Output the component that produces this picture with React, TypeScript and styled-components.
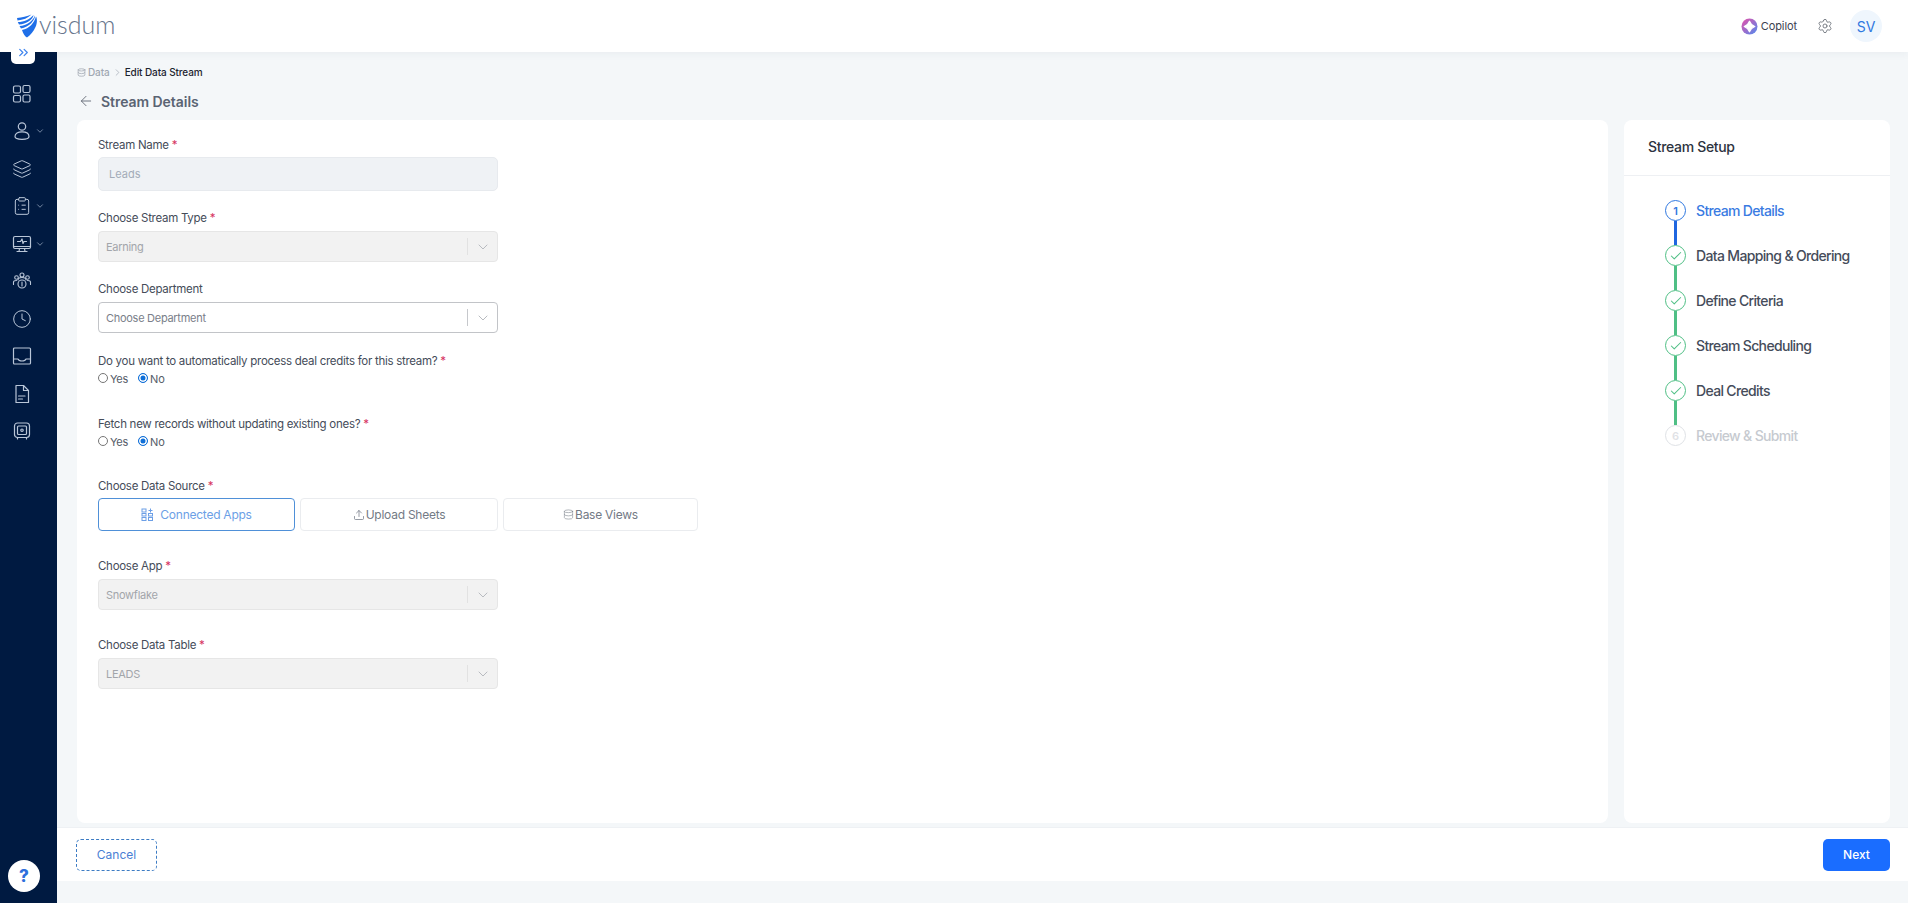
import React from "react";
import styled, { createGlobalStyle } from "styled-components";
import { ChevronDown, ChevronsRight, ChevronRight, ArrowLeft, Layers, ClipboardList, Clock, Settings, Upload, Database, Check } from "lucide-react";

const Global = createGlobalStyle`
  html, body { margin: 0; padding: 0; height: 100%; background: #f4f7f9; }
  body { font-family: Inter, "Noto Sans", sans-serif; color: #3f4654; overflow: hidden; }
  * { box-sizing: border-box; }
`;
const Shell = styled.div`
  width: 1908px; height: 903px; display: flex; flex-direction: column; position: relative;
`;
const Header = styled.header`
  height: 52px; flex: none; background: #fff; display: flex; align-items: center; justify-content: space-between;
  padding: 0 26px 0 17px; box-shadow: 0 2px 8px rgba(30,50,80,.05); position: relative; z-index: 2;
`;
const Logo = styled.div`
  display: flex; align-items: center; gap: 2px; margin-top: -1px;
`;
const LogoText = styled.span`
  font-family: Lato, sans-serif; font-weight: 300; font-size: 25px; color: #66758c; line-height: 1; margin-top: -2px;
`;
const HeaderRight = styled.div`
  display: flex; align-items: center;
`;
const Copilot = styled.div`
  display: flex; align-items: center; gap: 3px; font-size: 11px; font-weight: 400; letter-spacing: -.1px; color: #3c4250; margin-right: 20px;
`;
const Avatar = styled.div`
  width: 32px; height: 32px; border-radius: 50%; background: #eff6fd; color: #2f78e0; font-size: 14px;
  display: flex; align-items: center; justify-content: center; margin-left: 17px;
`;
const Body = styled.div`
  flex: 1; display: flex; min-height: 0;
`;
const Sidebar = styled.nav`
  width: 57px; flex: none; background: #001a41; position: relative; padding-top: 23px;
  display: flex; flex-direction: column; align-items: flex-start;
`;
const Toggle = styled.div`
  position: absolute; top: -12px; left: 11px; width: 24px; height: 24px; background: #fff; border-radius: 0 0 5px 5px;
  display: flex; align-items: center; justify-content: center; color: #3f84ee; z-index: 3;
`;
const NavItem = styled.div`
  height: 37.5px; width: 100%; padding-left: 12px; display: flex; align-items: center; gap: 3px; color: #b9c6d8; flex: none;
`;
const Help = styled.div`
  position: absolute; left: 8px; bottom: 11px; width: 32px; height: 32px; border-radius: 50%; background: #fff; color: #2f6fdc;
  font-weight: 800; font-size: 17px; display: flex; align-items: center; justify-content: center;
`;
const Main = styled.main`
  flex: 1; min-width: 0; display: flex; flex-direction: column;
`;
const Content = styled.div`
  flex: 1; min-height: 0; padding: 13px 18px 4px 20px; display: flex; flex-direction: column;
`;
const Crumbs = styled.div`
  display: flex; align-items: center; gap: 2px; height: 14px; font-size: 10px; font-weight: 500; color: #a0a7b2; letter-spacing: -.1px;
`;
const CrumbNow = styled.span`
  color: #1d2430; font-weight: 500; letter-spacing: -.1px;
`;
const TitleRow = styled.div`
  display: flex; align-items: center; gap: 7px; height: 24px; margin-top: 10px; margin-bottom: 7px; padding-left: 1px;
`;
const Title = styled.h1`
  margin: 0; font-size: 14px; font-weight: 600; color: #5a6473; letter-spacing: -.05px;
`;
const Cards = styled.div`
  flex: 1; display: flex; gap: 16px; min-height: 0;
`;
const FormCard = styled.section`
  flex: 1; background: #fff; border-radius: 8px; padding: 18px 21px;
`;
const Field = styled.div<{ $h: number }>`
  height: ${(p) => p.$h}px; width: 400px;
`;
const Label = styled.label`
  display: block; font-size: 11.5px; line-height: 14px; color: #454c59; font-weight: 400; letter-spacing: -.28px; white-space: nowrap;
`;
const Req = styled.span`
  color: #d6335f;
`;
const TextInput = styled.div`
  margin-top: 5px; height: 34px; background: #eff2f5; border: 1px solid #e7eaee; border-radius: 5px; padding-left: 10px;
  font-size: 11px; color: #a3acb8; display: flex; align-items: center;
`;
const Select = styled.div<{ $on?: boolean }>`
  margin-top: 6px; height: 31px; border-radius: 4px; display: flex; align-items: center; padding-left: 7px;
  font-size: 11px; letter-spacing: -.28px;
  background: ${(p) => (p.$on ? "#fff" : "#f2f2f2")};
  border: 1px solid ${(p) => (p.$on ? "#c2c4c8" : "#e6e6e6")};
  color: ${(p) => (p.$on ? "#7a808a" : "#a2a5aa")};
`;
const SelectText = styled.span`
  flex: 1;
`;
const SelectSep = styled.span<{ $on?: boolean }>`
  width: 1px; height: 17px; background: ${(p) => (p.$on ? "#c6c8cc" : "#e2e2e2")};
`;
const SelectArrow = styled.span`
  width: 29px; display: flex; justify-content: center; color: #b8bbc0;
`;
const Radios = styled.div`
  display: flex; align-items: center; margin-top: 3px; height: 16px; font-size: 11px; color: #555c68; letter-spacing: -.25px;
`;
const Radio = styled.span<{ $on?: boolean }>`
  width: 10px; height: 10px; border-radius: 50%; flex: none; margin-right: 2px; margin-top: -2px;
  border: 1px solid ${(p) => (p.$on ? "#0f6fd8" : "#767676")};
  background: ${(p) => (p.$on ? "#0f6fd8" : "#fff")};
  box-shadow: ${(p) => (p.$on ? "inset 0 0 0 1.5px #fff" : "none")};
`;
const RadioText = styled.span`
  margin-right: 10px;
`;
const Tabs = styled.div`
  display: flex; gap: 5px; margin-top: 5px; width: 600px;
`;
const Tab = styled.div<{ $on?: boolean; $w: number }>`
  width: ${(p) => p.$w}px; flex: none; height: 33px; border-radius: 4px; display: flex; align-items: center; justify-content: center;
  font-size: 12px; letter-spacing: -.25px;
  gap: ${(p) => (p.$on ? 6 : 1)}px;
  border: 1px solid ${(p) => (p.$on ? "#4f90d8" : "#eaecef")};
  color: ${(p) => (p.$on ? "#6c9fe6" : "#737a85")};
`;
const SideCard = styled.aside`
  width: 266px; flex: none; background: #fff; border-radius: 8px;
`;
const SideHead = styled.div`
  height: 56px; border-bottom: 1px solid #eef0f3; padding: 0 0 2px 24px; display: flex; align-items: center;
  font-size: 14px; font-weight: 500; color: #2d3340; letter-spacing: -.32px;
`;
const Steps = styled.ol`
  list-style: none; margin: 0; padding: 24px 0 0 41px;
`;
const Step = styled.li`
  display: flex; flex-direction: column;
`;
const StepRow = styled.div`
  display: flex; align-items: center; gap: 10px;
`;
const Dot = styled.span<{ $c: string }>`
  width: 21px; height: 21px; border-radius: 50%; flex: none; display: flex; align-items: center; justify-content: center;
  border: 1.3px solid ${(p) => p.$c}; color: ${(p) => p.$c}; font-size: 11px; font-weight: 600;
`;
const StepText = styled.span<{ $c: string }>`
  font-size: 14px; font-weight: 500; color: ${(p) => p.$c}; letter-spacing: -.66px; white-space: nowrap;
`;
const Line = styled.span<{ $c: string }>`
  display: block; width: 3px; height: 24px; margin-left: 9px; background: ${(p) => p.$c};
`;
const Footer = styled.footer`
  height: 54px; flex: none; background: #fff; display: flex; align-items: center; justify-content: space-between;
  padding: 0 18px 0 19px; border-top: 1px solid #eef1f4;
`;
const Cancel = styled.button`
  width: 81px; height: 32px; border: 1px dashed #3d7cc4; border-radius: 5px; background: #fff; color: #4a7fd4;
  font: 400 12px Inter, sans-serif;
`;
const Next = styled.button`
  width: 67px; height: 32px; border: 0; border-radius: 5px; background: #1a6dff; color: #fff;
  font: 500 12px Inter, sans-serif;
`;
const Strip = styled.div`
  height: 22px; flex: none;
`;

const Shield = () => (
  <svg width="20" height="24" viewBox="0 0 20 24" fill="#1f6fe8">
    <path d="M0 4C5 3.500 10 2.500 14.500 0.500C11 4 6 6 0.500 6.500Z" />
    <path d="M0.800 8C7 8 12.500 5.500 16.500 1C16.500 5 9 10.500 2 10.500Z" />
    <path d="M2.500 12C10 11.500 15.500 7.500 18 1.500C18.500 5.500 12 13.500 4 14.500Z" />
    <path d="M5 16C12.500 14.500 17 9 19 2.500C20.500 5 20 10 18.500 13C16.500 17.500 13.500 21 10 23.500C8 22.500 6 19.500 5 16Z" />
  </svg>
);
const CopilotIcon = () => (
  <svg width="17" height="17" viewBox="0 0 17 17">
    <defs>
      <linearGradient id="cg" x1="0" y1="0" x2="1" y2="1">
        <stop offset="0" stopColor="#e84fa8" />
        <stop offset="1" stopColor="#4f8cf0" />
      </linearGradient>
    </defs>
    <circle cx="8.500" cy="8.500" r="8" fill="url(#cg)" />
    <path d="M8.500 3.200C9.500 6 11 7.500 13.800 8.500C11 9.500 9.500 11 8.500 13.800C7.500 11 6 9.500 3.200 8.500C6 7.500 7.500 6 8.500 3.200Z" fill="#fff" stroke="#fff" strokeWidth="1.200" strokeLinejoin="round" />
  </svg>
);
const Stroke = styled.svg.attrs({ viewBox: "0 0 20 20", fill: "none", stroke: "currentColor" })`
  width: 20px; height: 20px; stroke-width: 1.2; stroke-linejoin: round; stroke-linecap: round; flex: none;
`;
const GridIcon = () => (
  <Stroke>
    <rect x="1.500" y="2" width="7" height="7" rx="1.500" />
    <rect x="11" y="1.500" width="7" height="7" rx="1.500" />
    <rect x="1.500" y="11.500" width="7" height="6.500" rx="1.500" />
    <rect x="11" y="11" width="7" height="7" rx="1.500" />
  </Stroke>
);
const UserIcon = () => (
  <Stroke>
    <circle cx="10" cy="5.500" r="3.700" />
    <path d="M3 15.500C3 12.500 6 10.800 10 10.800S17 12.500 17 15.500C17 17.500 14 18.300 10 18.300S3 17.500 3 15.500Z" />
  </Stroke>
);
const MonitorIcon = () => (
  <Stroke>
    <rect x="1.500" y="2.500" width="17" height="12" rx="1.500" />
    <path d="M1.500 12.500H18.500M7.500 14.500L7 17.500M12.500 14.500L13 17.500M5 17.500H15M5.500 7.500H8.500L10 5L11 9.500L12 7.500H14.500" />
  </Stroke>
);
const Team = () => (
  <Stroke style={{ strokeWidth: 1.1 }}>
    <circle cx="10" cy="4" r="2" />
    <circle cx="4.500" cy="6.500" r="1.800" />
    <circle cx="15.500" cy="6.500" r="1.800" />
    <path d="M1.500 13.500V11c0-1 1-1.500 3-1.500M18.500 13.500V11c0-1-1-1.500-3-1.500M6 9c0-1.500 1.500-2.500 4-2.500S14 7.500 14 9" />
    <circle cx="10" cy="13" r="4" />
    <path d="M10 11v4" />
  </Stroke>
);
const Inbox = () => (
  <Stroke>
    <rect x="1.500" y="2" width="17" height="16" rx="1" />
    <path d="M1.500 13H6c.6 1.500 2 2 4 2s3.400-.5 4-2h4.500" />
  </Stroke>
);
const FileIcon = () => (
  <Stroke>
    <path d="M4 1.500H11.500L16.500 6.500V18.500H4Z" />
    <path d="M11.500 1.500V6.500H16.500M6.500 12H13M6.500 15H10.500" />
  </Stroke>
);
const Safe = () => (
  <Stroke>
    <rect x="2.500" y="2" width="15" height="14.500" rx="3" />
    <rect x="5.500" y="5" width="9" height="8.500" rx="1" />
    <circle cx="10" cy="9.200" r="1.200" />
    <path d="M5.500 16.500V18M14.500 16.500V18" />
  </Stroke>
);
const AppsIcon = () => (
  <svg width="13" height="13" viewBox="0 0 13 13" fill="none" stroke="currentColor" strokeWidth="1">
    <rect x="1" y="1" width="4" height="3" />
    <rect x="1" y="5.500" width="4" height="2.500" />
    <rect x="1" y="9.500" width="4" height="3" />
    <rect x="7.500" y="5.500" width="4" height="2.500" />
    <rect x="7.500" y="9.500" width="4" height="3" />
    <path d="M9.500 .5v4M7.500 2.500h4" />
  </svg>
);

const icons: { el: React.ReactNode; caret?: boolean }[] = [
  { el: <GridIcon /> },
  { el: <UserIcon />, caret: true },
  { el: <Layers size={20} strokeWidth={1.2} /> },
  { el: <ClipboardList size={20} strokeWidth={1.2} />, caret: true },
  { el: <MonitorIcon />, caret: true },
  { el: <Team /> },
  { el: <Clock size={20} strokeWidth={1.2} /> },
  { el: <Inbox /> },
  { el: <FileIcon /> },
  { el: <Safe /> },
];

const steps = [
  { t: "Stream Details", c: "#2f78e0", tc: "#3a7be2", n: "1", line: "#1f66e0" },
  { t: "Data Mapping & Ordering", c: "#4fbf85", tc: "#454c5a", line: "#4fbf85" },
  { t: "Define Criteria", c: "#4fbf85", tc: "#454c5a", line: "#4fbf85" },
  { t: "Stream Scheduling", c: "#4fbf85", tc: "#454c5a", line: "#4fbf85" },
  { t: "Deal Credits", c: "#4fbf85", tc: "#454c5a", line: "#4fbf85" },
  { t: "Review & Submit", c: "#dfe2e6", tc: "#c6cad0", n: "6" },
];

const Sel = ({ text, on }: { text: string; on?: boolean }) => (
  <Select $on={on}>
    <SelectText>{text}</SelectText>
    <SelectSep $on={on} />
    <SelectArrow><ChevronDown size={16} strokeWidth={1.5} /></SelectArrow>
  </Select>
);
const RadioSet = () => (
  <Radios>
    <Radio />
    <RadioText>Yes</RadioText>
    <Radio $on />
    <span>No</span>
  </Radios>
);

export default function App() {
  return (
    <Shell>
      <Global />
      <Header>
        <Logo>
          <Shield />
          <LogoText>visdum</LogoText>
        </Logo>
        <HeaderRight>
          <Copilot><CopilotIcon />Copilot</Copilot>
          <Settings size={16} strokeWidth={1.3} color="#6b7078" />
          <Avatar>SV</Avatar>
        </HeaderRight>
      </Header>
      <Body>
        <Sidebar>
          <Toggle><ChevronsRight size={15} strokeWidth={2} /></Toggle>
          {icons.map((it, i) => (
            <NavItem key={i}>
              {it.el}
              {it.caret && <ChevronDown size={10} strokeWidth={1.5} />}
            </NavItem>
          ))}
          <Help>?</Help>
        </Sidebar>
        <Main>
          <Content>
            <Crumbs>
              <Database size={9} strokeWidth={2} />
              <span>Data</span>
              <ChevronRight size={11} strokeWidth={1.5} />
              <CrumbNow>Edit Data Stream</CrumbNow>
            </Crumbs>
            <TitleRow>
              <ArrowLeft size={16} strokeWidth={1.4} color="#666d78" />
              <Title>Stream Details</Title>
            </TitleRow>
            <Cards>
              <FormCard>
                <Field $h={73}>
                  <Label>Stream Name <Req>*</Req></Label>
                  <TextInput>Leads</TextInput>
                </Field>
                <Field $h={71}>
                  <Label>Choose Stream Type <Req>*</Req></Label>
                  <Sel text="Earning" />
                </Field>
                <Field $h={72}>
                  <Label>Choose Department</Label>
                  <Sel text="Choose Department" on />
                </Field>
                <Field $h={63}>
                  <Label>Do you want to automatically process deal credits for this stream? <Req>*</Req></Label>
                  <RadioSet />
                </Field>
                <Field $h={62}>
                  <Label>Fetch new records without updating existing ones? <Req>*</Req></Label>
                  <RadioSet />
                </Field>
                <Field $h={80}>
                  <Label>Choose Data Source <Req>*</Req></Label>
                  <Tabs>
                    <Tab $on $w={197}><AppsIcon />Connected Apps</Tab>
                    <Tab $w={198}><Upload size={12} strokeWidth={1.5} />Upload Sheets</Tab>
                    <Tab $w={195}><Database size={11} strokeWidth={1.2} />Base Views</Tab>
                  </Tabs>
                </Field>
                <Field $h={79}>
                  <Label>Choose App <Req>*</Req></Label>
                  <Sel text="Snowflake" />
                </Field>
                <Field $h={60}>
                  <Label>Choose Data Table <Req>*</Req></Label>
                  <Sel text="LEADS" />
                </Field>
              </FormCard>
              <SideCard>
                <SideHead>Stream Setup</SideHead>
                <Steps>
                  {steps.map((s) => (
                    <Step key={s.t}>
                      <StepRow>
                        <Dot $c={s.c}>{s.n ?? <Check size={14} strokeWidth={1.8} />}</Dot>
                        <StepText $c={s.tc}>{s.t}</StepText>
                      </StepRow>
                      {s.line && <Line $c={s.line} />}
                    </Step>
                  ))}
                </Steps>
              </SideCard>
            </Cards>
          </Content>
          <Footer>
            <Cancel>Cancel</Cancel>
            <Next>Next</Next>
          </Footer>
          <Strip />
        </Main>
      </Body>
    </Shell>
  );
}
